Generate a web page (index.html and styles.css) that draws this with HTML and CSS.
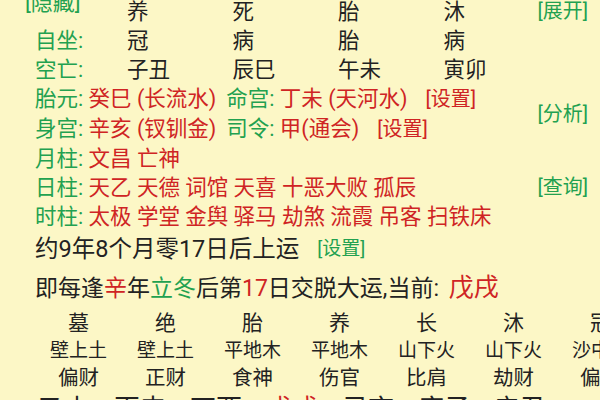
FILE: index.html
```html
<!DOCTYPE html>
<html lang="zh-CN">
<head>
  <meta charset="UTF-8" />
  <meta name="viewport" content="width=device-width, initial-scale=1.0" />
  <title>排盘</title>
  <link rel="stylesheet" href="styles.css">
</head>
<body>

  <div class="page">
    <div class="row">
      <div class="label top"><span class="link hide-tag">[隐藏]</span></div>
      <div class="cell">养</div>
      <div class="cell">死</div>
      <div class="cell">胎</div>
      <div class="cell">沐</div>
      <span class="link side">[展开]</span>
    </div>
    <div class="row">
      <div class="label green">自坐:</div>
      <div class="cell">冠</div>
      <div class="cell">病</div>
      <div class="cell">胎</div>
      <div class="cell">病</div>
    </div>
    <div class="row">
      <div class="label green">空亡:</div>
      <div class="cell">子丑</div>
      <div class="cell">辰巳</div>
      <div class="cell">午未</div>
      <div class="cell">寅卯</div>
    </div>

    <div class="block">
      <div>
        <div class="line">
          <span class="green">胎元:</span> <span class="red">癸巳 (长流水)</span><span class="green gap">命宫:</span> <span class="red">丁未 (天河水)</span><span class="red set">[设置]</span>
        </div>
        <div class="line">
          <span class="green">身宫:</span> <span class="red">辛亥 (钗钏金)</span><span class="green gap">司令:</span> <span class="red">甲(通会)</span><span class="red set">[设置]</span>
        </div>
      </div>
      <span class="link side">[分析]</span>
    </div>

    <div class="line"><span class="green">月柱:</span> <span class="red">文昌 亡神</span></div>
    <div class="block">
      <div class="line"><span class="green">日柱:</span> <span class="red">天乙 天德 词馆 天喜 十恶大败 孤辰</span></div>
      <span class="link side">[查询]</span>
    </div>
    <div class="line"><span class="green">时柱:</span> <span class="red">太极 学堂 金舆 驿马 劫煞 流霞 吊客 扫铁床</span></div>

    <div class="start">约9年8个月零17日后上运 <span class="link small">[设置]</span></div>
    <div class="jiao">即每逢<span class="red">辛</span>年<span class="green">立冬</span>后第<span class="red">17</span>日交脱大运,当前: <span class="red big">戊戌</span></div>

    <div class="table">
      <div class="t1">墓</div><div class="t1">绝</div><div class="t1">胎</div><div class="t1">养</div><div class="t1">长</div><div class="t1">沐</div><div class="t1">冠</div>
      <div class="t2">壁上土</div><div class="t2">壁上土</div><div class="t2">平地木</div><div class="t2">平地木</div><div class="t2">山下火</div><div class="t2">山下火</div><div class="t2">沙中金</div>
      <div class="t3">偏财</div><div class="t3">正财</div><div class="t3">食神</div><div class="t3">伤官</div><div class="t3">比肩</div><div class="t3">劫财</div><div class="t3">偏印</div>
    </div>
    <div class="dayun">
      <span>乙未</span><span>丙申</span><span>丁酉</span><span class="red">戊戌</span><span>己亥</span><span>庚子</span><span>辛丑</span>
    </div>
  </div>

</body>
</html>
```

FILE: styles.css
```css
* {
  box-sizing: border-box;
}

body {
  margin: 0;
  background: #fcf7c6;
  color: #222;
  font-family: Roboto, "Noto Sans CJK SC", sans-serif;
  font-size: 21.5px;
  overflow: hidden;
  height: 400px;
}

.page {
  margin-top: -3px;
  padding: 0 12px 0 35px;
}

.green {
  color: #22a150;
}

.red {
  color: #cf2424;
}

.link {
  color: #22a150;
  font-size: 20px;
}

.row,
.block {
  display: flex;
  align-items: center;
}

.row,
.line,
.block {
  line-height: 29px;
  white-space: nowrap;
}

.label {
  width: 92px;
  flex: none;
}

.label.top {
  align-self: flex-start;
}

.cell {
  width: 105.5px;
  flex: none;
}

.cell:nth-child(5) {
  width: auto;
}

.hide-tag {
  display: block;
  margin: -9px 0 0 -10px;
  font-size: 22px;
}

.side {
  margin-left: auto;
}

.gap {
  margin-left: 10px;
}

.set {
  margin-left: 18px;
  font-size: 20px;
}

.start {
  line-height: 36px;
  font-size: 23.5px;
  white-space: nowrap;
}

.start .small {
  font-size: 19px;
  margin-left: 12px;
  vertical-align: 2px;
}

.jiao {
  line-height: 41px;
  font-size: 23px;
  white-space: nowrap;
}

.jiao .big {
  font-size: 25px;
  margin-left: 4px;
}

.table {
  display: grid;
  grid-template-columns: repeat(7, 87px);
  text-align: center;
  white-space: nowrap;
}

.t1 {
  line-height: 29px;
  font-size: 21px;
}

.t2 {
  line-height: 25px;
  font-size: 19px;
}

.t3 {
  line-height: 31px;
  font-size: 20.5px;
}

.dayun {
  display: flex;
  margin-left: -9px;
  font-size: 26px;
  line-height: 30px;
  white-space: nowrap;
}

.dayun span {
  width: 76px;
  flex: none;
  text-align: center;
}
```
